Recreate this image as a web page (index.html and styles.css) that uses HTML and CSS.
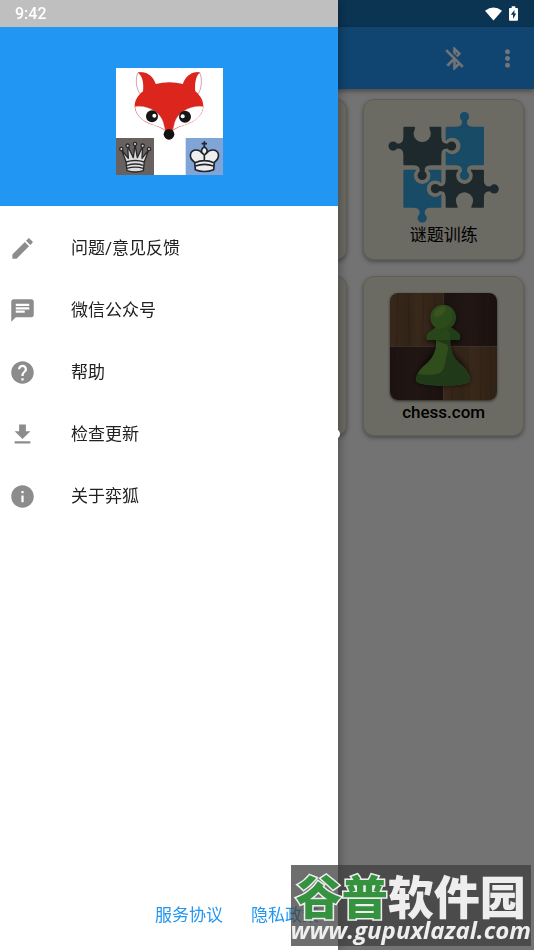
FILE: index.html
```html
<!DOCTYPE html>
<html lang="zh-CN">
<head>
<meta charset="utf-8">
<meta name="viewport" content="width=device-width, initial-scale=1">
<title>弈狐</title>
<link rel="stylesheet" href="styles.css">
</head>
<body>
<div class="app">
  <div class="status-space"></div>
  <header class="app-bar">
    <button class="icon-button" type="button">
      <svg class="icon" viewBox="0 0 24 24"><path d="M13 5.830l1.880 1.880-1.600 1.600 1.410 1.410 3.020-3.020L12 2h-1v5.030l2 2v-3.200zM5.410 4L4 5.410 10.590 12 5 17.590 6.410 19 11 14.410V22h1l4.290-4.290 2.300 2.290L20 18.590 5.410 4zM13 18.170v-3.760l1.880 1.880L13 18.170z" stroke="currentColor" stroke-width=".4"/></svg>
    </button>
    <button class="icon-button" type="button">
      <svg class="icon" viewBox="0 0 24 24"><circle cx="12" cy="6" r="2.200"/><circle cx="12" cy="12" r="2.200"/><circle cx="12" cy="18" r="2.200"/></svg>
    </button>
  </header>
  <main class="grid">
    <div class="card"></div>
    <div class="card"></div>
    <button class="card" type="button">
      <span class="card-art">
        <svg class="puzzle" viewBox="38 34 335 336">
          <defs>
            <g id="knob">
              <path d="M-24 2V-1C-16-1-7-6-8-15L-7-24H7L8-15C7-6 16-1 24-1V2Z"/>
              <circle cy="-32" r="14"/>
            </g>
          </defs>
          <g class="puzzle-blue">
            <rect x="212" y="79" width="116" height="116" rx="3"/>
            <rect x="84" y="209" width="115" height="115" rx="3"/>
            <use href="#knob" transform="translate(269 80)"/>
            <use href="#knob" transform="translate(141 323) rotate(180)"/>
          </g>
          <g class="puzzle-gap">
            <circle cx="232" cy="137" r="25"/>
            <rect x="199" y="121" width="18" height="32"/>
            <circle cx="141" cy="227" r="25"/>
            <rect x="125" y="200" width="32" height="14"/>
            <circle cx="180" cy="266" r="25"/>
            <rect x="194" y="250" width="18" height="32"/>
          </g>
          <g class="puzzle-dark">
            <rect x="84" y="79" width="115" height="116" rx="3"/>
            <rect x="212" y="209" width="116" height="115" rx="3"/>
            <use href="#knob" transform="translate(85 137) rotate(-90)"/>
            <use href="#knob" transform="translate(198 137) rotate(90)"/>
            <use href="#knob" transform="translate(141 194) rotate(180)"/>
            <use href="#knob" transform="translate(213 266) rotate(-90)"/>
            <use href="#knob" transform="translate(327 267) rotate(90)"/>
          </g>
          <g class="puzzle-gap">
            <circle cx="141" cy="99" r="26"/>
            <rect x="119" y="76" width="44" height="12"/>
            <circle cx="269" cy="227" r="25"/>
            <rect x="250" y="204" width="38" height="12"/>
            <circle cx="269" cy="303" r="26"/>
            <rect x="248" y="316" width="42" height="12"/>
          </g>
          <use class="puzzle-blue" href="#knob" transform="translate(269 194) rotate(180)"/>
        </svg>
      </span>
      <span class="card-label">谜题训练</span>
    </button>
    <div class="card"></div>
    <div class="card"></div>
    <button class="card" type="button">
      <span class="card-art">
        <svg class="pawn" viewBox="182 84 318 318">
          <defs>
            <linearGradient id="oak" x2="1"><stop offset="0" stop-color="#79573a"/><stop offset=".35" stop-color="#6d4e34"/><stop offset=".5" stop-color="#7a593b"/><stop offset="1" stop-color="#694930"/></linearGradient>
            <linearGradient id="walnut" x2="1"><stop offset="0" stop-color="#3c2923"/><stop offset=".5" stop-color="#48302a"/><stop offset="1" stop-color="#39261f"/></linearGradient>
            <filter id="soft" x="-20%" y="-20%" width="140%" height="140%"><feGaussianBlur stdDeviation="8"/></filter>
          </defs>
          <rect x="182" y="84" width="159" height="159" fill="url(#oak)"/>
          <rect x="341" y="84" width="159" height="159" fill="url(#walnut)"/>
          <rect x="182" y="243" width="159" height="159" fill="url(#walnut)"/>
          <rect x="341" y="243" width="159" height="159" fill="url(#oak)"/>
          <path d="M205 84l-4 159M236 84l3 159M282 84l-4 159M315 84l4 159M372 243l-5 159M412 243l5 159M454 243l-3 159M480 243l3 159" stroke="#4e3423" stroke-width="2" opacity=".5" fill="none"/>
          <path d="M385 84l-4 159M432 84l4 159M474 84l-5 159M204 243l5 159M310 243l4 159" stroke="#553a31" stroke-width="2" opacity=".5" fill="none"/>
          <path filter="url(#soft)" opacity=".6" d="M340 125a38 38 0 0 0-25 65l-25 24v16h28c3 50-56 55-58 115 0 20 160 20 160 0-2-60-58-65-60-115h31v-16l-26-24a38 38 0 0 0-25-65z"/>
          <path fill="#69a83e" d="M319 222c2 43-15 60-37 79-15 14-22 27-22 43 0 21 160 21 160 0 0-16-8-29-22-43-22-19-38-36-37-79z"/>
          <path fill="#467c38" d="M361 222c-1 43 15 60 37 79 14 14 22 27 22 43 0 21-160 21-160 0q0-8 2-20c22 5 49 4 65-1 20-7 19-42 25-61 3-12 5-17-2-25l-29-10v-5z"/>
          <path fill="#589a39" d="M315 188l-20 15c-6 5-6 14-3 21h96c4-7 4-16-2-21l-20-15z"/>
          <path fill="#4b8737" d="M347 188h19l20 15c6 5 6 14 2 21h-28c1-18-2-28-13-36z"/>
          <circle cx="340" cy="157" r="38" fill="#60a439"/>
          <path fill="#529238" d="M366 130a38 38 0 0 1-43 61c30 2 53-24 43-61z"/>
          <ellipse cx="330" cy="139" rx="20" ry="11" fill="#86b544" transform="rotate(-38 330 139)"/>
        </svg>
      </span>
      <span class="card-label latin">chess.com</span>
    </button>
  </main>
</div>

<div class="scrim"></div>

<aside class="drawer">
  <div class="drawer-status"></div>
  <div class="drawer-header">
    <svg class="logo" viewBox="32 21 321 321">
      <rect x="32" y="21" width="321" height="321" fill="#fff"/>
      <path d="M98 35C90 50 91 83 105 99L150 70C140 46 120 32 98 35zM283 35C291 50 290 83 278 99L233 70C243 46 263 32 283 35z" fill="#fff" stroke="#bd7478" stroke-width="2"/>
      <path d="M98 35C124 30 144 46 151 69Q192 58 233 69C240 46 260 30 284 35C270 43 268 73 270 91C286 104 294 119 294 137C293 165 262 185 234 193C215 199 202 208 191 220C180 208 167 199 148 193C116 185 90 164 88 137C88 119 96 105 113 91C116 68 112 45 98 35z" fill="#dc251d"/>
      <path d="M89 137C121 130 165 151 174 184Q177 198 180 208C161 194 142 195 119 181C104 172 91 157 89 137zM294 137C263 130 217 151 208 184Q205 198 202 208C221 194 240 195 263 181C279 172 292 157 294 137z" fill="#fff" stroke="#cf7c85" stroke-width="1"/>
      <circle cx="140" cy="166" r="18" fill="#161617"/><circle cx="239" cy="167" r="18" fill="#161617"/>
      <circle cx="147" cy="164" r="6" fill="#fff"/><circle cx="232" cy="166" r="6" fill="#fff"/>
      <circle cx="191" cy="220" r="16" fill="#121213"/>
      <rect x="32" y="231" width="114" height="111" fill="#68615f"/>
      <rect x="241" y="231" width="112" height="111" fill="#80a4d5"/>
      <g fill="#ddd" stroke="#29292b" stroke-width="4" stroke-linejoin="round">
        <path d="M62 302L49 267L69 292L67 255L84 290L89 251L96 290L112 255L110 292L130 267L117 302L114 329Q90 337 65 329z"/>
        <circle cx="48" cy="264" r="5"/><circle cx="67" cy="254" r="5"/><circle cx="89" cy="249" r="5"/><circle cx="112" cy="254" r="5"/><circle cx="131" cy="264" r="5"/>
        <path d="M62 303Q90 294 117 303M65 313Q90 305 114 313M65 322Q90 315 114 322" fill="none"/>
      </g>
      <g fill="#eee" stroke="#202530" stroke-width="5" stroke-linejoin="round">
        <path d="M297 241v25M289 248h16" fill="none"/>
        <path d="M268 304C246 288 255 267 273 267Q284 267 291 277Q284 265 297 258Q310 265 303 277Q310 267 322 267C340 267 348 288 327 304L325 326Q297 337 270 326z"/>
        <path d="M269 305Q297 293 326 305M270 315Q297 305 325 315M297 298V282Q292 278 291 275M297 282Q302 279 304 275" fill="none"/>
      </g>
    </svg>
  </div>
  <nav class="menu">
    <button class="menu-item" type="button">
      <svg class="icon" viewBox="0 0 24 24"><path d="M3 17.250V21h3.750L17.810 9.940l-3.750-3.750L3 17.250zM20.710 7.040c.39-.39.39-1.020 0-1.410l-2.340-2.340c-.39-.39-1.020-.39-1.410 0l-1.830 1.830 3.750 3.750 1.830-1.830z"/></svg>
      <span>问题/意见反馈</span>
    </button>
    <button class="menu-item" type="button">
      <svg class="icon" viewBox="0 0 24 24"><path d="M20 2H4c-1.100 0-1.990.9-1.990 2L2 22l4-4h14c1.100 0 2-.9 2-2V4c0-1.100-.9-2-2-2zM6 9h12v2H6V9zm8 5H6v-2h8v2zm4-6H6V6h12v2z"/></svg>
      <span>微信公众号</span>
    </button>
    <button class="menu-item" type="button">
      <svg class="icon" viewBox="0 0 24 24"><path d="M12 2C6.480 2 2 6.480 2 12s4.480 10 10 10 10-4.480 10-10S17.520 2 12 2zm1 17h-2v-2h2v2zm2.070-7.750l-.9.920C13.450 12.900 13 13.500 13 15h-2v-.5c0-1.100.45-2.100 1.170-2.830l1.240-1.260c.37-.36.59-.86.59-1.410 0-1.100-.9-2-2-2s-2 .9-2 2H8c0-2.210 1.790-4 4-4s4 1.790 4 4c0 .88-.36 1.680-.93 2.250z"/></svg>
      <span>帮助</span>
    </button>
    <button class="menu-item" type="button">
      <svg class="icon" viewBox="0 0 24 24"><path d="M19 9h-4V3H9v6H5l7 7 7-7zM5 18v2h14v-2H5z"/></svg>
      <span>检查更新</span>
    </button>
    <button class="menu-item" type="button">
      <svg class="icon" viewBox="0 0 24 24"><path d="M12 2C6.480 2 2 6.480 2 12s4.480 10 10 10 10-4.480 10-10S17.520 2 12 2zm1 15h-2v-6h2v6zm0-8h-2V7h2v2z"/></svg>
      <span>关于弈狐</span>
    </button>
  </nav>
  <footer class="legal">
    <a href="#terms">服务协议</a>
    <a href="#privacy">隐私政策</a>
  </footer>
  <span class="drawer-handle"></span>
</aside>

<div class="status-bar">
  <span>9:42</span>
  <span class="status-icons">
    <svg class="wifi" viewBox="0 0 18 14"><path d="M9 14L0 3.500Q9-3.500 18 3.500z"/></svg>
    <svg class="battery" viewBox="0 0 10 16"><path fill-rule="evenodd" d="M3 0h4v2h2q1 0 1 1v12q0 1-1 1H1q-1 0-1-1V3q0-1 1-1h2zM6 4L2 9.500h2.500V14L8 8H6z"/></svg>
  </span>
</div>

<div class="watermark">
  <div class="watermark-name"><span class="watermark-green">谷普</span>软件园</div>
  <div class="watermark-url">www.gupuxlazal.com</div>
</div>
</body>
</html>
```
FILE: styles.css
```css
* {
  box-sizing: border-box;
}

body {
  margin: 0;
  background: #fafafa;
  font-family: Roboto, "Noto Sans CJK SC", sans-serif;
  font-size: 17px;
  line-height: 24px;
  color: #212121;
}

button {
  border: 0;
  padding: 0;
  background: none;
  font: inherit;
  color: inherit;
  cursor: pointer;
}

svg {
  display: block;
}

.icon {
  width: 27px;
  height: 27px;
  fill: currentColor;
}

.app {
  min-height: 100vh;
}

.status-space {
  height: 27px;
  background: #1971b6;
}

.app-bar {
  display: flex;
  justify-content: flex-end;
  height: 62px;
  background: #2196f3;
  color: #fff;
  box-shadow: 0 2px 5px rgba(0, 0, 0, 0.4);
}

.icon-button {
  display: grid;
  place-items: center;
  width: 53px;
}

.grid {
  display: grid;
  grid-template-columns: repeat(3, 1fr);
  gap: 16px;
  padding: 10px;
}

.card {
  display: flex;
  flex-direction: column;
  align-items: center;
  aspect-ratio: 1;
  padding-top: 12px;
  border: 1px solid #d0cdbd;
  border-radius: 11px;
  background: #eae7d8;
  color: #000;
  box-shadow: 0 2px 4px rgba(0, 0, 0, 0.35);
}

.card-art {
  display: flex;
  align-items: flex-end;
  height: 111px;
}

.card-label {
  line-height: 24px;
}

.latin {
  font-weight: 500;
}

.puzzle {
  width: 111px;
  height: 111px;
}

.puzzle-blue {
  fill: #34a3df;
}

.puzzle-dark {
  fill: #425b62;
}

.puzzle-gap {
  fill: #eae7d8;
}

.pawn {
  width: 107px;
  height: 107px;
  border-radius: 8px;
  box-shadow: 0 1px 3px rgba(0, 0, 0, 0.6);
}

.scrim {
  position: fixed;
  inset: 0;
  background: rgba(0, 0, 0, 0.54);
}

.drawer {
  position: fixed;
  top: 0;
  bottom: 0;
  left: 0;
  display: flex;
  flex-direction: column;
  width: 338px;
  max-width: 85%;
  background: #fff;
  box-shadow: 2px 0 10px rgba(0, 0, 0, 0.3);
}

.drawer-status {
  height: 27px;
  background: #bfbfbf;
}

.drawer-header {
  display: grid;
  place-items: center;
  padding: 41px 0 31px;
  background: #2196f3;
}

.logo {
  width: 107px;
  height: 107px;
}

.menu {
  display: flex;
  flex-direction: column;
  flex: 1;
  padding-top: 11px;
}

.menu-item {
  display: flex;
  align-items: center;
  gap: 35px;
  height: 62px;
  padding: 0 9px;
  text-align: left;
}

.menu-item .icon {
  color: #8c8c8c;
}

.legal {
  display: flex;
  justify-content: flex-end;
  gap: 28px;
  padding: 0 19px 23px;
}

.legal a {
  color: #2196f3;
  text-decoration: none;
}

.drawer-handle {
  position: absolute;
  right: -2px;
  top: 429px;
  width: 10px;
  height: 10px;
  border-radius: 50%;
  background: #fff;
}

.status-bar {
  position: fixed;
  top: 0;
  left: 0;
  right: 0;
  display: flex;
  align-items: center;
  justify-content: space-between;
  height: 27px;
  padding: 0 16px 0 15px;
  color: #fff;
  font-size: 16px;
  font-weight: 500;
}

.status-icons {
  display: flex;
  align-items: center;
  gap: 7px;
  fill: #fff;
}

.wifi {
  width: 17px;
  height: 14px;
}

.battery {
  width: 9px;
  height: 15px;
}

.watermark {
  position: fixed;
  right: 3px;
  bottom: 4px;
  padding: 8px 0 2px;
  background: rgba(62, 62, 62, 0.75);
  color: #eee;
  text-align: center;
  white-space: nowrap;
}

.watermark-name {
  padding: 0 4px;
  font-family: "Noto Sans CJK SC", sans-serif;
  font-size: 46px;
  font-weight: 900;
  line-height: 42px;
}

.watermark-green {
  color: #35923f;
  -webkit-text-stroke: 3px #eee;
  paint-order: stroke fill;
}

.watermark-url {
  font-family: "Open Sans", sans-serif;
  font-size: 24px;
  font-style: italic;
  font-weight: 700;
  line-height: 29px;
}
```
